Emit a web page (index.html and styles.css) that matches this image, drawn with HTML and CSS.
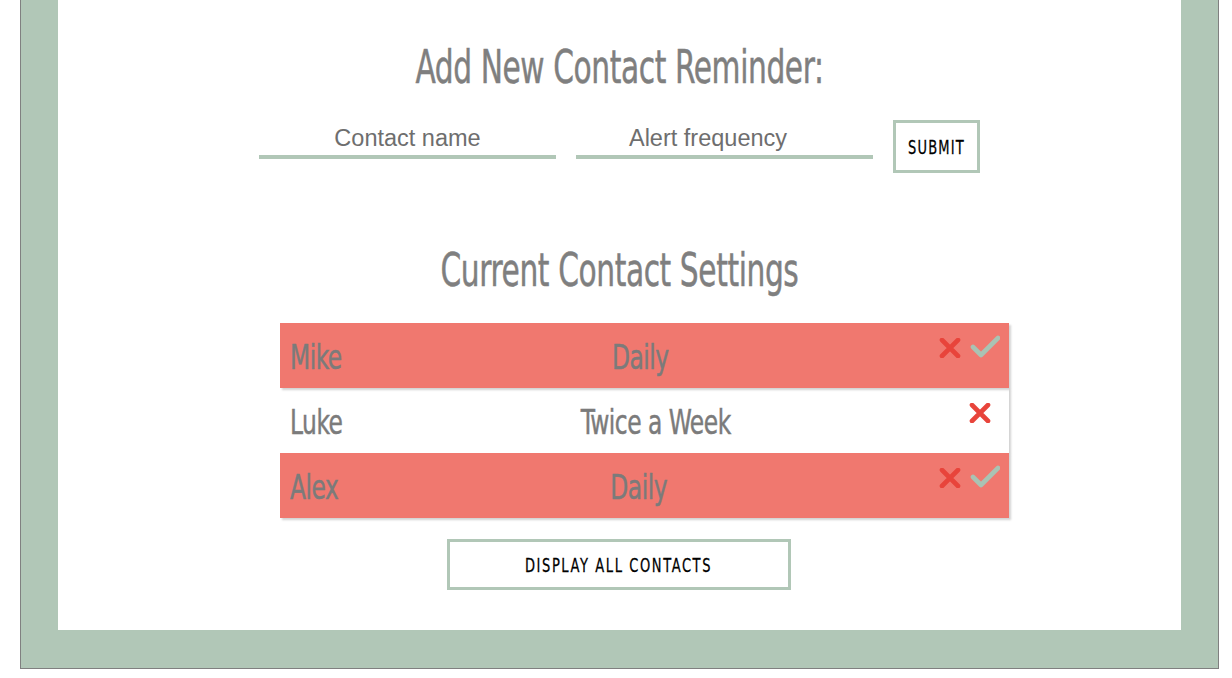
FILE: index.html
```html
<!DOCTYPE html>
<html>
<head>
<meta charset="utf-8">
<link rel="stylesheet" href="styles.css">
</head>
<body>
<div class="frame">
  <div class="panel">
    <h1 class="title title-add"><span class="tall">Add New Contact Reminder:</span></h1>
    <form class="add-form">
      <input class="field" type="text" placeholder="Contact name">
      <input class="field field-freq" type="text" placeholder="Alert frequency">
      <button class="btn btn-submit" type="button"><span class="tall">SUBMIT</span></button>
    </form>
    <h1 class="title title-current"><span class="tall">Current Contact Settings</span></h1>
    <div class="contacts">
      <div class="row row-alert">
        <span class="cell tall">Mike</span>
        <span class="cell tall">Daily</span>
        <span class="icons">
          <svg class="ico-x" width="31" height="20" viewBox="0 0 31 20"><path d="M3 2 L19 18 M19 2 L3 18" stroke="#e8443b" stroke-width="4.6" stroke-linecap="round"/></svg>
          <svg class="ico-check" width="30" height="24" viewBox="0 0 30 24"><path d="M3 12 L11 20 L28 3" fill="none" stroke="#a9c3b3" stroke-width="4.6" stroke-linecap="round" stroke-linejoin="round"/></svg>
        </span>
      </div>
      <div class="row">
        <span class="cell tall">Luke</span>
        <span class="cell tall">Twice a Week</span>
        <span class="icons">
          <svg class="ico-x" width="31" height="20" viewBox="0 0 31 20"><path d="M3 2 L19 18 M19 2 L3 18" stroke="#e8443b" stroke-width="4.6" stroke-linecap="round"/></svg>
        </span>
      </div>
      <div class="row row-alert">
        <span class="cell tall">Alex</span>
        <span class="cell tall">Daily</span>
        <span class="icons">
          <svg class="ico-x" width="31" height="20" viewBox="0 0 31 20"><path d="M3 2 L19 18 M19 2 L3 18" stroke="#e8443b" stroke-width="4.6" stroke-linecap="round"/></svg>
          <svg class="ico-check" width="30" height="24" viewBox="0 0 30 24"><path d="M3 12 L11 20 L28 3" fill="none" stroke="#a9c3b3" stroke-width="4.6" stroke-linecap="round" stroke-linejoin="round"/></svg>
        </span>
      </div>
    </div>
    <div class="display-wrap">
      <button class="btn btn-display" type="button"><span class="tall">DISPLAY ALL CONTACTS</span></button>
    </div>
  </div>
</div>
</body>
</html>
```
FILE: styles.css
```css
html, body {
  margin: 0;
  padding: 0;
  background: #ffffff;
}

body {
  font-family: "Liberation Sans", Arial, sans-serif;
}

.frame {
  margin-left: 20px;
  width: 1123px;
  padding: 0 37px 38px 37px;
  background: #b1c7b7;
  border-left: 1px solid #808080;
  border-right: 1px solid #808080;
  border-bottom: 1px solid #808080;
}

.panel {
  background: #ffffff;
  height: 630px;
  padding-top: 1px;
  box-sizing: border-box;
}

.tall {
  display: inline-block;
  font-family: "DejaVu Sans Condensed", "DejaVu Sans", sans-serif;
  font-stretch: condensed;
  transform: scaleY(1.45);
  -webkit-text-stroke: 0.35px currentColor;
}

.title {
  margin: 0;
  text-align: center;
  font-weight: normal;
  color: #7f7f7f;
  font-size: 33px;
  letter-spacing: -0.4px;
  line-height: 40px;
}

.title .tall {
  transform: scaleY(1.38);
}

.title-add {
  margin-top: 47px;
}

.add-form {
  display: flex;
  justify-content: center;
  align-items: flex-start;
  gap: 20px;
  margin: 33px 0 0 0;
}

.field {
  width: 297px;
  height: 38px;
  box-sizing: border-box;
  border: none;
  border-bottom: 4px solid #b1c7b7;
  background: transparent;
  text-align: center;
  font-family: "Liberation Sans", Arial, sans-serif;
  font-size: 23.5px;
  color: #707070;
  outline: none;
  padding: 0;
}

.field-freq {
  padding-right: 33px;
}

.field::placeholder {
  color: #6e6e6e;
}

.btn {
  background: #ffffff;
  border: 3px solid #b1c7b7;
  color: #000000;
  cursor: pointer;
  padding: 0;
  box-sizing: border-box;
}

.btn .tall {
  font-size: 14.5px;
  letter-spacing: 1.2px;
  transform: scaleY(1.35);
  -webkit-text-stroke: 0.2px currentColor;
}

.btn-submit {
  width: 87px;
  height: 53px;
  margin-top: -1px;
}

.title-current {
  margin-top: 78px;
}

.contacts {
  margin: 32px 0 0 222px;
  width: 729px;
}

.row {
  display: flex;
  justify-content: space-between;
  align-items: flex-start;
  height: 65px;
  padding: 0 9px 0 10px;
  box-sizing: border-box;
  box-shadow: 2px 2px 2px rgba(0, 0, 0, 0.18);
  color: #7b7b7b;
}

.row-alert {
  background: #f0786f;
  position: relative;
}

.cell {
  font-size: 26px;
  letter-spacing: -0.5px;
  line-height: 30px;
  margin-top: 19px;
  transform: scaleY(1.3);
}

.icons {
  display: flex;
  align-items: flex-start;
  margin-top: 15px;
}

.ico-check {
  margin-top: -3px;
}

.display-wrap {
  display: flex;
  justify-content: center;
  margin-top: 21px;
  padding-right: 2px;
}

.btn-display {
  width: 344px;
  height: 51px;
}

.btn-display .tall {
  letter-spacing: 1.6px;
}
```
